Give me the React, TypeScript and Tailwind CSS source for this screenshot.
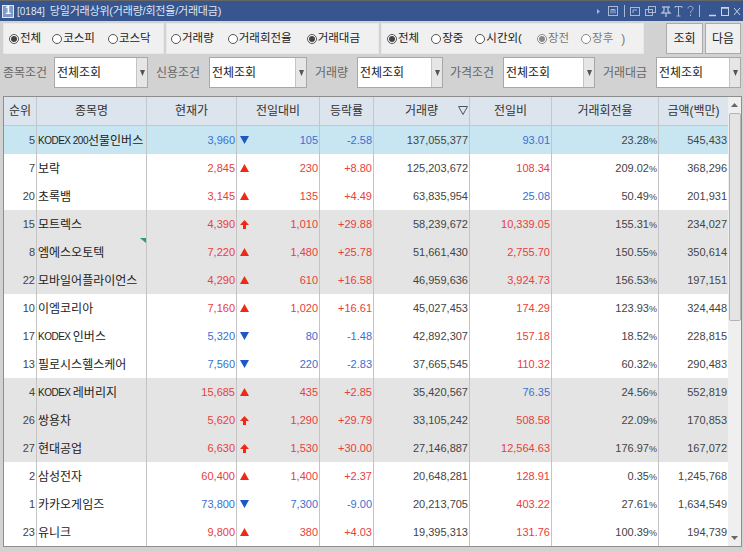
import React from "react";

type Row = [string, string, string, "d" | "u" | "l", string, string, string, string, string, string];
const rows: Row[] = [
  ["5", "KODEX 200|선물인버스", "3,960", "d", "105", "-2.58", "137,055,377", "93.01", "23.28", "545,433"],
  ["7", "|보락", "2,845", "u", "230", "+8.80", "125,203,672", "108.34", "209.02", "368,296"],
  ["20", "|초록뱀", "3,145", "u", "135", "+4.49", "63,835,954", "25.08", "50.49", "201,931"],
  ["15", "|모트렉스", "4,390", "l", "1,010", "+29.88", "58,239,672", "10,339.05", "155.31", "234,027"],
  ["8", "|엠에스오토텍", "7,220", "u", "1,480", "+25.78", "51,661,430", "2,755.70", "150.55", "350,614"],
  ["22", "|모바일어플라이언스", "4,290", "u", "610", "+16.58", "46,959,636", "3,924.73", "156.53", "197,151"],
  ["10", "|이엠코리아", "7,160", "u", "1,020", "+16.61", "45,027,453", "174.29", "123.93", "324,448"],
  ["17", "KODEX |인버스", "5,320", "d", "80", "-1.48", "42,892,307", "157.18", "18.52", "228,815"],
  ["13", "|필로시스헬스케어", "7,560", "d", "220", "-2.83", "37,665,545", "110.32", "60.32", "290,483"],
  ["4", "KODEX |레버리지", "15,685", "u", "435", "+2.85", "35,420,567", "76.35", "24.56", "552,819"],
  ["26", "|쌍용차", "5,620", "l", "1,290", "+29.79", "33,105,242", "508.58", "22.09", "170,853"],
  ["27", "|현대공업", "6,630", "l", "1,530", "+30.00", "27,146,887", "12,564.63", "176.97", "167,072"],
  ["2", "|삼성전자", "60,400", "u", "1,400", "+2.37", "20,648,281", "128.91", "0.35", "1,245,768"],
  ["1", "|카카오게임즈", "73,800", "d", "7,300", "-9.00", "20,213,705", "403.22", "27.61", "1,634,549"],
  ["23", "|유니크", "9,800", "u", "380", "+4.03", "19,395,313", "131.76", "100.39", "194,739"],
];
const blueRatio = new Set(["93.01", "25.08", "76.35"]);
const bands = ["bg-[#c8e6f2]", "bg-white", "bg-white", "bg-[#e4e4e4]", "bg-[#e4e4e4]", "bg-[#e4e4e4]", "bg-white", "bg-white", "bg-white", "bg-[#e4e4e4]", "bg-[#e4e4e4]", "bg-[#e4e4e4]", "bg-white", "bg-white", "bg-white"];

const RED = "text-[#e8403c]";
const BLUE = "text-[#3a6fd0]";
const cols = "grid grid-cols-[33px_110px_90px_83px_54px_96px_82px_107px_69px]";

function Radio({ label, on, dim, className }: { label: string; on?: boolean; dim?: boolean; className?: string }) {
  return (
    <span className={`flex items-center gap-[1px] text-[11.5px] ${dim ? "text-[#777]" : "text-[#222]"} ${className ?? ""}`}>
      <span className={`flex h-[10px] w-[10px] items-center justify-center rounded-full border bg-white ${dim ? "border-[#888]" : "border-[#555]"}`}>
        {on && <span className={`h-[6px] w-[6px] rounded-full ${dim ? "bg-[#888]" : "bg-[#444]"}`} />}
      </span>
      <span className="pt-[1px]">{label}</span>
    </span>
  );
}

function Select({ width }: { width: string }) {
  return (
    <div className={`flex h-[31px] items-stretch border border-[#a8a8a8] bg-white ${width}`}>
      <span className="flex-1 self-center pl-[2px] pt-[1px] text-[12px] text-[#222]">전체조회</span>
      <span className="flex w-[11px] items-center justify-center border-l border-[#c4c4c4] bg-[#e6e6e6]">
        <svg width="5" height="6" viewBox="0 0 5 6"><path d="M0 0h5L2.5 6z" fill="#555" /></svg>
      </span>
    </div>
  );
}

function Label({ text, width }: { text: string; width: string }) {
  return <span className={`shrink-0 pt-[1px] text-[12px] text-[#666] ${width}`}>{text}</span>;
}

function Arrow({ t }: { t: "d" | "u" | "l" }) {
  if (t === "d") return <svg width="9" height="8" viewBox="0 0 9 8"><path d="M0 0h9L4.5 8z" fill="#1f57c4" /></svg>;
  if (t === "u") return <svg width="9" height="8" viewBox="0 0 9 8"><path d="M0 8h9L4.5 0z" fill="#ee2a12" /></svg>;
  return <svg width="9" height="9" viewBox="0 0 9 9"><path d="M4.5 0L9 5H6v4H3V5H0z" fill="#ee2a12" /></svg>;
}

function Head({ children, className }: { children: React.ReactNode; className?: string }) {
  return <div className={`flex items-center justify-center border-r border-[#c2c8d0] text-[12px] text-[#333] ${className ?? ""}`}>{children}</div>;
}

function Cell({ children, color, className }: { children: React.ReactNode; color?: string; className?: string }) {
  return (
    <div className={`flex items-center justify-end border-r border-[#c4c4c4] pr-[1px] ${color ?? "text-[#444]"} ${className ?? ""}`}>
      <span>{children}</span>
    </div>
  );
}

export default function App() {
  return (
    <div className="flex h-[552px] w-[743px] flex-col overflow-hidden bg-[#d2d2d2] font-['Liberation_Sans','Noto_Sans_CJK_KR',sans-serif]">
      <div className="flex h-[21px] shrink-0 items-center border-t border-[#666] bg-[#37558f] pl-[2px] pr-[2px] text-[#dfe6f2]">
        <span className="flex h-[13px] w-[12px] items-center justify-center border border-[#dfe6f2] bg-[#7f9cc8] text-[10px] font-bold leading-none text-white">1</span>
        <span className="ml-[3px] text-[10px]">[0184]</span>
        <span className="ml-[5px] text-[11px] tracking-[-0.2px]">당일거래상위(거래량/회전율/거래대금)</span>
        <svg className="ml-auto" width="113" height="13" viewBox="0 0 113 13" fill="none" stroke="#a9b9d4">
          <path d="M1 4l3 2.5L1 9z" fill="#a9b9d4" stroke="none" />
          <rect x="12.5" y="1.5" width="9" height="9" />
          <path d="M15 4.5v4M17 4.5v4M19 4.5v4M15 4.5h4" />
          <path d="M28.5 0v12" />
          <rect x="34.5" y="2.5" width="9" height="8" />
          <path d="M37 8V5h4" />
          <rect x="52.5" y="1.5" width="7" height="6" />
          <rect x="49.5" y="4.5" width="7" height="6" />
          <path d="M66 2h8M68 2v4l-2 2h8l-2-2V2M70 8v4" strokeWidth="1.4" />
          <path d="M79 3V1.5h7V3M82.5 1.5V11M80.5 11h4" />
          <path d="M92 3.5c0-3 5-3 5 0 0 2-2.500 2-2.500 4.500M94.500 9.500v1.500" />
          <path d="M103.500 0v12" />
        </svg>
        <svg width="32" height="13" viewBox="0 0 32 13" fill="none" stroke="#c9d4e6" className="shrink-0">
          <path d="M0 10.500h7" strokeWidth="1.500" />
          <rect x="12.500" y="2.500" width="7" height="8" />
          <path d="M12 3h8" strokeWidth="1.500" />
          <path d="M25 3l6 7M31 3l-6 7" />
        </svg>
      </div>

      <div className="mt-[2px] flex h-[31px] shrink-0 pl-[3px] pr-[2px]">
        <div className="flex w-[161px] items-center border border-[#e8e8e8] bg-[#f0f0f0] pl-[5px]">
          <Radio label="전체" on />
          <Radio label="코스피" className="ml-[11px]" />
          <Radio label="코스닥" className="ml-[13px]" />
        </div>
        <div className="ml-[2px] flex w-[213px] items-center border border-[#e8e8e8] bg-[#f0f0f0] pl-[4px]">
          <Radio label="거래량" />
          <Radio label="거래회전율" className="ml-[14px]" />
          <Radio label="거래대금" on className="ml-[15px]" />
        </div>
        <div className="ml-[2px] flex w-[263px] items-center border border-[#e8e8e8] bg-[#f0f0f0] pl-[5px]">
          <Radio label="전체" on />
          <Radio label="장중" className="ml-[12px]" />
          <Radio label="시간외(" className="ml-[12px]" />
          <Radio label="장전" on dim className="ml-[15px]" />
          <Radio label="장후" dim className="ml-[12px]" />
          <span className="ml-[8px] text-[12px] text-[#777]">)</span>
        </div>
        <button className="ml-[22px] h-[31px] w-[37px] border border-[#aaa] bg-[#f0f0f0] text-[12px] text-[#222]">조회</button>
        <button className="ml-[2px] h-[31px] w-[36px] border border-[#aaa] bg-[#f0f0f0] text-[12px] text-[#222]">다음</button>
      </div>

      <div className="mt-[3px] flex h-[31px] shrink-0 items-center pl-[3px]">
        <Label text="종목조건" width="w-[51px]" />
        <Select width="w-[94px]" />
        <Label text="신용조건" width="ml-[8px] w-[53px]" />
        <Select width="w-[98px]" />
        <Label text="거래량" width="ml-[8px] w-[42px]" />
        <Select width="w-[86px]" />
        <Label text="가격조건" width="ml-[7px] w-[53px]" />
        <Select width="w-[92px]" />
        <Label text="거래대금" width="ml-[8px] w-[53px]" />
        <Select width="w-[85px]" />
      </div>

      <div className="ml-[3px] mr-[1px] mt-[8px] flex h-[451px] shrink-0 flex-col border border-[#8e8e8e] bg-white p-0">
        <div className="flex min-h-0 flex-1">
          <div className="flex min-w-0 flex-1 flex-col">
            <div className={`${cols} h-[29px] shrink-0 border-b border-[#c2c8d0] bg-[#dce4ee]`}>
              <Head>순위</Head>
              <Head>종목명</Head>
              <Head>현재가</Head>
              <Head>전일대비</Head>
              <Head>등락률</Head>
              <Head className="relative">
                거래량
                <svg className="absolute right-[1px] top-[9px]" width="10" height="9" viewBox="0 0 10 9"><path d="M.5.5h9L5 8.500z" fill="none" stroke="#555" /></svg>
              </Head>
              <Head>전일비</Head>
              <Head>거래회전율</Head>
              <Head className="border-r-0">금액(백만)</Head>
            </div>
            <div className="grid flex-1 grid-rows-[repeat(15,1fr)] text-[11px]">
              {rows.map((r, i) => {
                const c = r[3] === "d" ? BLUE : RED;
                const [latin, korean] = r[1].split("|");
                return (
                  <div key={r[0]} className={`${cols} ${bands[i]}`}>
                    <Cell>{r[0]}</Cell>
                    <div className="relative flex items-center justify-start whitespace-pre border-r border-[#c4c4c4] pl-[1px] pt-[1px] text-[12px] text-[#222]">
                      {latin && <span className="text-[10px] tracking-[-0.5px]">{latin}</span>}
                      <span>{korean}</span>
                      {r[0] === "8" && (
                        <svg className="absolute right-0 top-0" width="6" height="5" viewBox="0 0 6 5"><path d="M0 0h6v5z" fill="#1fa36a" /></svg>
                      )}
                    </div>
                    <Cell color={c}>{r[2]}</Cell>
                    <div className={`flex items-center border-r border-[#c4c4c4] pl-[3px] pr-[1px] ${c}`}>
                      <Arrow t={r[3]} />
                      <span className="ml-auto">{r[4]}</span>
                    </div>
                    <Cell color={c}>{r[5]}</Cell>
                    <Cell>{r[6]}</Cell>
                    <Cell color={blueRatio.has(r[7]) ? BLUE : RED}>{r[7]}</Cell>
                    <Cell>{r[8]}<span className="text-[9px]">%</span></Cell>
                    <Cell className="border-r-0">{r[9]}</Cell>
                  </div>
                );
              })}
            </div>
          </div>
          <div className="flex w-[13px] shrink-0 flex-col items-center bg-[#efefef]">
            <span className="flex h-[16px] items-center">
              <svg width="7" height="4" viewBox="0 0 7 4"><path d="M0 4h7L3.500 0z" fill="#666" /></svg>
            </span>
            <div className="h-[208px] w-[12px] rounded-[2px] border border-[#b4b4b4] bg-[#e4e4e4]" />
            <span className="mt-auto flex h-[16px] items-center">
              <svg width="7" height="4" viewBox="0 0 7 4"><path d="M0 0h7L3.500 4z" fill="#666" /></svg>
            </span>
          </div>
        </div>
      </div>
    </div>
  );
}
